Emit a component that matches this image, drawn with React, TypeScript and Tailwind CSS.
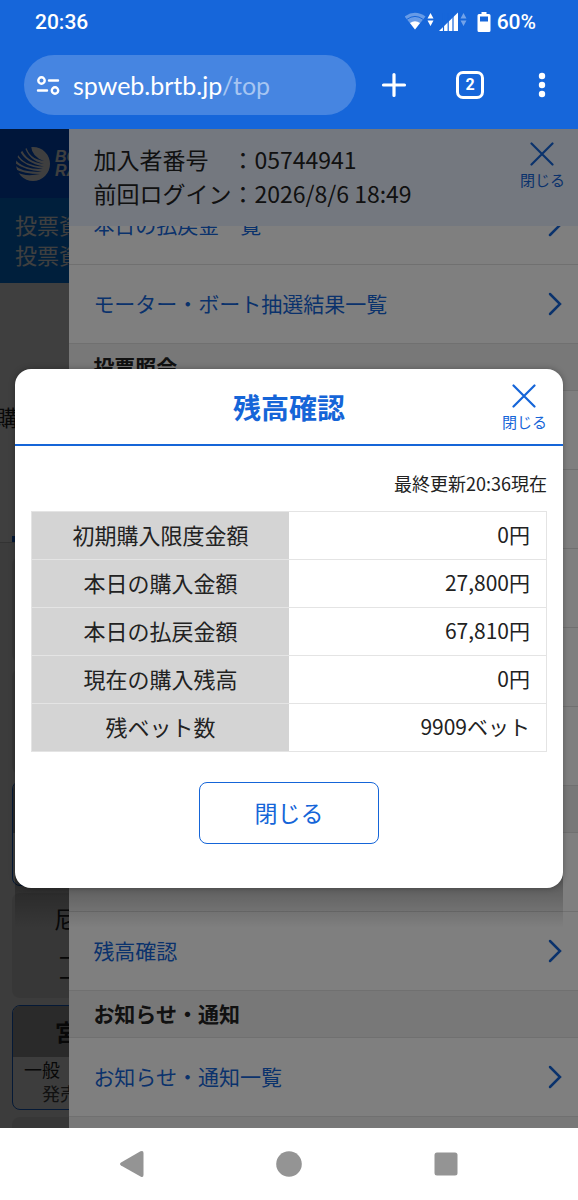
import React from 'react';

type Row = { kind: 'link' | 'section'; label?: string };

const menuRows: Row[] = [
    { kind: 'link', label: '本日の払戻金一覧' },
    { kind: 'link', label: 'モーター・ボート抽選結果一覧' },
    { kind: 'section', label: '投票照会' },
    { kind: 'link' },
    { kind: 'link' },
    { kind: 'link' },
    { kind: 'link' },
    { kind: 'link' },
    { kind: 'section' },
    { kind: 'link' },
    { kind: 'link', label: '残高確認' },
    { kind: 'section', label: 'お知らせ・通知' },
    { kind: 'link', label: 'お知らせ・通知一覧' },
    { kind: 'section' },
];

const balances = [
    { label: '初期購入限度金額', value: '0円' },
    { label: '本日の購入金額', value: '27,800円' },
    { label: '本日の払戻金額', value: '67,810円' },
    { label: '現在の購入残高', value: '0円' },
    { label: '残ベット数', value: '9909ベット' },
];

const CloseButton = () => (
    <button type="button" className="flex flex-col items-center text-[15px] leading-5 text-[#1565d8]">
        <svg className="mb-1 h-6 w-6" viewBox="0 0 24 24" fill="none" stroke="currentColor" strokeWidth="2.2" strokeLinecap="round">
            <path d="M1.5 1.5 22.5 22.5M22.5 1.5 1.5 22.5" />
        </svg>
        閉じる
    </button>
);

const StatusBar = () => (
    <div className="flex h-11 items-center justify-between pl-[35px] pr-[42px] font-[Roboto,sans-serif] text-[21px] font-medium leading-6">
        <span>20:36</span>
        <div className="flex items-center">
            <svg className="h-6 w-[88px]" viewBox="0 0 88 24" fill="#fff">
                {/* wifi */}
                <path opacity=".35" d="M-.5 6.500Q10 -1 20.500 6.500L10 19.500Z" />
                <path d="M2 9.300Q10 3.500 18 9.300" fill="none" stroke="#1666da" strokeWidth="1" />
                <path d="M5 13Q10 9.500 15 13L10 19.500Z" />
                {/* data arrows */}
                <path d="M22.500 8.500 25.500 3 28.500 8.500ZM22.500 10.500 25.500 16 28.500 10.500Z" />
                {/* signal */}
                <path d="M34 21 53 2.500V21Z" />
                <path d="M38.500 3V22M43.200 3V22M48 3V22" stroke="#1666da" strokeWidth="1.200" />
                <path opacity=".4" d="M55.500 8.500 58.500 3 61.500 8.500ZM55.500 10.500 58.500 16 61.500 10.500Z" />
                {/* battery */}
                <path fillRule="evenodd" d="M76.500 2h5v2h2.500a1.500 1.500 0 0 1 1.500 1.500v15a1.500 1.500 0 0 1-1.500 1.500h-10a1.500 1.500 0 0 1-1.500-1.500v-15a1.500 1.500 0 0 1 1.500-1.500H76.500ZM75 6.500v5h8v-5Z" />
            </svg>
            <span className="ml-1">60%</span>
        </div>
    </div>
);

const Toolbar = () => (
    <div className="flex items-center pb-3.5 pl-6 pr-0.5 pt-[11px]">
        <div className="flex h-[60px] min-w-0 flex-1 items-center rounded-full bg-[#4685e1] pl-3">
            <svg className="h-6 w-6 shrink-0" viewBox="0 0 24 24" fill="none" stroke="#fff" strokeWidth="2.400" strokeLinecap="round">
                <circle cx="5.500" cy="7.500" r="3.200" />
                <path d="M13 7.500h9M2 17.500h9" />
                <circle cx="19" cy="17.500" r="3.200" />
            </svg>
            <p className="ml-[13px] truncate font-[Lato,sans-serif] text-[25px] leading-8">
                spweb.brtb.jp<span className="text-[#a6c5f2]">/top</span>
            </p>
        </div>
        <button type="button" aria-label="新しいタブ" className="flex w-[76px] justify-center">
            <svg className="h-7 w-7" viewBox="0 0 28 28" stroke="#fff" strokeWidth="3.200" strokeLinecap="round">
                <path d="M14 3.500v21M3.500 14h21" />
            </svg>
        </button>
        <button type="button" className="flex w-[76px] justify-center">
            <span className="flex h-7 w-7 items-center justify-center rounded-[7px] border-3 border-white font-[Roboto,sans-serif] text-base font-bold">
                2
            </span>
        </button>
        <button type="button" aria-label="メニュー" className="flex w-[68px] justify-center">
            <svg className="h-7 w-7" viewBox="0 0 28 28" fill="#fff">
                <circle cx="14" cy="5" r="3.200" />
                <circle cx="14" cy="14" r="3.200" />
                <circle cx="14" cy="23" r="3.200" />
            </svg>
        </button>
    </div>
);

const Logo = () => (
    <svg className="h-9 w-9 shrink-0" viewBox="0 0 36 36">
        <circle cx="18" cy="18" r="17" fill="#fff" />
        <g fill="#0058e8">
            <path d="M11 0H16Q17 11 29 15Q14 13 11 0Z" />
            <path d="M6 2L9.500 0Q13 14 29 18Q11 16 6 2Z" />
            <path d="M2 7L4.500 4Q10 17 29 20.500Q8 20 2 7Z" />
            <path d="M0 13L1.500 10Q9 20.500 28 23Q7 23.500 0 13Z" />
            <path d="M0 19.500V17Q9 24 27 25.500Q8 27 0 19.500Z" />
            <path d="M1 26L0 23Q9 28 25 28Q10 31 1 26Z" />
        </g>
    </svg>
);

const RaceCard = ({ name, active, children }: { name?: string; active?: boolean; children?: React.ReactNode }) => (
    <div
        className={
            active
                ? 'col-start-1 h-[105px] overflow-hidden rounded-lg border border-[#1565d8] bg-[#f4f4f4]'
                : 'col-start-1 h-[105px] overflow-hidden rounded-lg bg-[#dedede]'
        }
    >
        <h3 className={active ? 'h-[51px] bg-[#a8a8a8] pl-[42px] text-[23px] font-bold leading-[50px]' : 'h-[51px] pl-[42px] text-[23px] leading-[50px]'}>
            {name}
        </h3>
        {children}
    </div>
);

const TopPage = () => (
    <div className="absolute inset-0 overflow-hidden bg-[#f0f0f0] text-[#222]">
        <header className="flex h-[69px] items-center gap-1 bg-[#0058e8] pl-[15px]">
            <Logo />
            <p className="font-['Liberation_Sans',sans-serif] text-base font-bold italic leading-[14px] text-white">
                BO
                <br />
                RA
            </p>
        </header>
        <div className="h-[85px] bg-[#007cf0] pl-[15px] pt-[11px] text-[22px] leading-[30px] text-white">
            <p>投票資</p>
            <p>投票資</p>
        </div>
        <div className="h-[260px] border-b border-[#ccc] bg-white pt-[117px] text-[22px] leading-8">
            <p className="-ml-1">購</p>
            <div className="ml-3 mt-[104px] h-1.5 w-1/4 bg-[#1565d8]" />
        </div>
        <div className="grid grid-cols-4 gap-[7px] px-3 pt-[14px]">
            <RaceCard />
            <RaceCard />
            <RaceCard active />
            <RaceCard name="尼">
                <p className="pl-[46px] pt-1 text-xl leading-5">ー</p>
                <p className="pl-[46px] text-xl leading-5">ー</p>
            </RaceCard>
            <RaceCard name="宮" active>
                <p className="pl-[11px] text-lg leading-6">一般</p>
                <p className="pl-[29px] text-lg leading-6 text-[#444]">発売</p>
            </RaceCard>
            <RaceCard />
        </div>
    </div>
);

const MenuDrawer = () => (
    <aside className="absolute inset-y-0 right-0 flex w-[88%] flex-col overflow-hidden bg-white">
        <header className="flex h-[97px] shrink-0 justify-between bg-[#e8f0ff] pl-6 pr-[13px] pt-[13px] text-[#222]">
            <div className="text-[23px] leading-[34px]">
                <p>加入者番号　：05744941</p>
                <p>前回ログイン：2026/8/6 18:49</p>
            </div>
            <div className="shrink-0">
                <CloseButton />
            </div>
        </header>
        <div className="min-h-0 flex-1 overflow-hidden">
            <nav className="-mt-10">
                {menuRows.map((row, i) =>
                    row.kind === 'section' ? (
                        <h2 key={i} className="h-[47px] border-b border-[#e0e0e0] bg-[#f0f0f0] pl-6 text-[21px] font-bold leading-[44px] text-[#222]">
                            {row.label}
                        </h2>
                    ) : (
                        <a key={i} href="#" className="flex h-[79px] items-center justify-between border-b border-[#e0e0e0] pl-6 pr-4 text-[21px] text-[#1565d8]">
                            {row.label}
                            <svg className="ml-auto h-6 w-[14px]" viewBox="0 0 14 24" fill="none" stroke="currentColor" strokeWidth="2.500" strokeLinecap="round">
                                <path d="M2 2 12 12 2 22" />
                            </svg>
                        </a>
                    )
                )}
            </nav>
        </div>
    </aside>
);

const BalanceModal = () => (
    <div role="dialog" aria-labelledby="balance-title" className="relative w-full">
        <div className="absolute inset-x-0 top-full -mt-4 h-14 bg-linear-to-b from-black/35 to-transparent" />
        <div className="relative rounded-2xl bg-white pb-11 shadow-[0_0_6px_rgba(0,0,0,0.3)]">
            <header className="grid h-[77px] grid-cols-[1fr_auto_1fr] border-b-2 border-[#1565d8] pl-4 pr-4 pt-[15px]">
                <h1 id="balance-title" className="col-start-2 text-[28px] font-bold leading-[46px] text-[#1565d8]">
                    残高確認
                </h1>
                <div className="justify-self-end">
                    <CloseButton />
                </div>
            </header>
            <div className="px-4 text-[#222]">
                <p className="pb-[15px] pt-6 text-right text-lg leading-[26px]">最終更新20:36現在</p>
                <table className="w-full table-fixed border-collapse border border-[#e4e4e4] text-[21px] leading-[45px]">
                    <tbody>
                        {balances.map((item) => (
                            <tr key={item.label} className="border-b border-[#e4e4e4]">
                                <th scope="row" className="bg-[#d4d4d4] px-0 pb-0.5 pt-0 text-center text-[22px] font-normal leading-[45px]">
                                    {item.label}
                                </th>
                                <td className="pb-0.5 pl-0 pr-4 pt-0 text-right">{item.value}</td>
                            </tr>
                        ))}
                    </tbody>
                </table>
                <button type="button" className="mx-auto mt-[30px] block h-[62px] w-[180px] rounded-lg border border-[#1565d8] pb-0.5 text-[23px] text-[#1565d8]">
                    閉じる
                </button>
            </div>
        </div>
    </div>
);

const NavigationBar = () => (
    <nav className="flex h-[72px] items-center justify-center gap-[129px] bg-white">
        <button type="button" aria-label="戻る">
            <svg className="h-7 w-7" viewBox="0 0 28 28" fill="#949494">
                <path d="M3 12.500 22.500 1.300Q25.500 0 25.500 3V25Q25.500 28 22.500 26.500L3 15.500Q1 14 3 12.500Z" />
            </svg>
        </button>
        <button type="button" aria-label="ホーム">
            <svg className="h-7 w-7" viewBox="0 0 28 28" fill="#949494">
                <circle cx="14" cy="14" r="12.800" />
            </svg>
        </button>
        <button type="button" aria-label="履歴">
            <svg className="h-7 w-7" viewBox="0 0 28 28" fill="#949494">
                <rect x="2.500" y="2.500" width="23" height="23" rx="2.500" />
            </svg>
        </button>
    </nav>
);

export default function App() {
    return (
        <div className="flex min-h-screen flex-col font-['Noto_Sans_CJK_JP',sans-serif]">
            <div className="bg-[#1666da] text-white">
                <StatusBar />
                <Toolbar />
            </div>
            <main className="relative flex flex-1 items-center overflow-hidden px-[15px]">
                <TopPage />
                <div className="absolute inset-0 bg-black/50" />
                <MenuDrawer />
                <div className="absolute inset-0 bg-black/50" />
                <BalanceModal />
            </main>
            <NavigationBar />
        </div>
    );
}
